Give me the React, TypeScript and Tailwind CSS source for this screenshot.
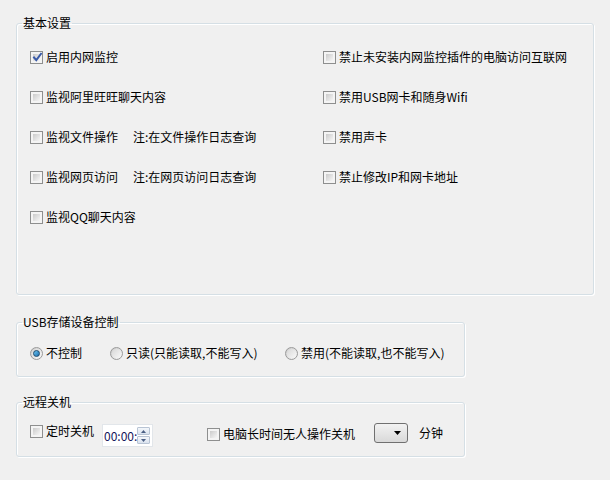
import React from "react";

const font = { fontFamily: '"Noto Sans CJK SC", "Noto Sans", sans-serif' };

function CheckBox({ checked = false }: { checked?: boolean }) {
  return (
    <div className="relative w-[13px] h-[13px] shrink-0 border border-[#8e8f8f] bg-[#f4f4f4] p-[2px]">
      <div className="w-full h-full bg-gradient-to-br from-[#cbcbcb] to-[#f6f6f6]" />
      {checked && (
        <svg className="absolute left-[1px] top-[0px]" width="11" height="11" viewBox="0 0 11 11">
          <path d="M2 5.5 L4.3 8.2 L9 1.8" fill="none" stroke="#3a5ba8" strokeWidth="2" strokeLinecap="square" />
        </svg>
      )}
    </div>
  );
}

function Radio({ checked = false }: { checked?: boolean }) {
  return (
    <div className="w-[13px] h-[13px] shrink-0 rounded-full border border-[#9a9a9a] bg-gradient-to-br from-[#c9c9c9] to-[#fbfbfb] flex items-center justify-center">
      <div className="w-[9px] h-[9px] rounded-full bg-gradient-to-br from-[#d8d8d8] to-[#f8f8f8] flex items-center justify-center">
        {checked && <div className="w-[7px] h-[7px] rounded-full border border-[#1c4a6e] bg-gradient-to-br from-[#6cc5f2] to-[#1a6fae]" />}
      </div>
    </div>
  );
}

function Check({ label, checked, note }: { label: React.ReactNode; checked?: boolean; note?: string }) {
  return (
    <div className="flex items-center h-[16px]">
      <CheckBox checked={checked} />
      <span className="ml-[3px] whitespace-nowrap">{label}</span>
      {note && <span className="ml-[15px] whitespace-nowrap">{note}</span>}
    </div>
  );
}

function Group({ title, className, children }: { title: string; className: string; children: React.ReactNode }) {
  return (
    <fieldset className={`box-border border border-[#d5dfe5] rounded-[3px] shadow-[inset_1px_1px_0_#ffffff,1px_1px_0_#ffffff] ${className}`}>
      <legend className="ml-[5px] px-[1px] leading-[16px] text-[12px]">{title}</legend>
      {children}
    </fieldset>
  );
}

export default function App() {
  return (
    <div className="w-[610px] h-[480px] bg-[#f0f0f0] text-[12px] leading-[16px] text-black px-[16px] pt-[15px] overflow-hidden" style={font}>
      <Group title="基本设置" className="w-[578px] h-[280px]">
        <div className="grid grid-cols-[293px_1fr] gap-y-[24px] pl-[13px] pt-[18px]">
          <Check label="启用内网监控" checked />
          <Check label="禁止未安装内网监控插件的电脑访问互联网" />
          <Check label="监视阿里旺旺聊天内容" />
          <Check label="禁用USB网卡和随身Wifi" />
          <Check label="监视文件操作" note="注:在文件操作日志查询" />
          <Check label="禁用声卡" />
          <Check label="监视网页访问" note="注:在网页访问日志查询" />
          <Check label="禁止修改IP和网卡地址" />
          <Check label="监视QQ聊天内容" />
          <div />
        </div>
      </Group>

      <Group title="USB存储设备控制" className="mt-[19px] w-[449px] h-[63px]">
        <div className="flex items-center h-[16px] pl-[13px] mt-[15px]">
          <div className="flex items-center w-[80px]">
            <Radio checked />
            <span className="ml-[3px] whitespace-nowrap">不控制</span>
          </div>
          <div className="flex items-center w-[175px]">
            <Radio />
            <span className="ml-[3px] whitespace-nowrap">只读(只能读取,不能写入)</span>
          </div>
          <div className="flex items-center">
            <Radio />
            <span className="ml-[3px] whitespace-nowrap">禁用(不能读取,也不能写入)</span>
          </div>
        </div>
      </Group>

      <Group title="远程关机" className="mt-[17px] w-[449px] h-[63px]">
        <div className="flex items-start pl-[13px] pt-[13px]">
          <Check label="定时关机" />
          <div className="ml-[8px] mt-[1px] w-[51px] h-[23px] bg-white border border-[#e2e6ea] flex items-center pl-[1px]">
            <span className="text-[#14145a]">00:00:</span>
            <div className="ml-auto mr-[2px] flex flex-col gap-[1px]">
              <div className="w-[13px] h-[8px] border border-[#b8c4d4] rounded-[1px] bg-gradient-to-b from-[#f4f7fb] to-[#d9e2ee] flex items-center justify-center">
                <svg width="5" height="3" viewBox="0 0 5 3"><path d="M0 3 L2.5 0 L5 3 Z" fill="#4a5f84" /></svg>
              </div>
              <div className="w-[13px] h-[8px] border border-[#b8c4d4] rounded-[1px] bg-gradient-to-b from-[#f4f7fb] to-[#d9e2ee] flex items-center justify-center">
                <svg width="5" height="3" viewBox="0 0 5 3"><path d="M0 0 L5 0 L2.5 3 Z" fill="#4a5f84" /></svg>
              </div>
            </div>
          </div>
          <div className="ml-[54px] mt-[3px]">
            <Check label="电脑长时间无人操作关机" />
          </div>
          <div className="ml-[19px] w-[34px] h-[20px] rounded-[3px] border border-[#707070] bg-gradient-to-b from-[#f2f2f2] to-[#d9d9d9] flex items-center justify-end pr-[6px]">
            <svg width="7" height="4" viewBox="0 0 7 4"><path d="M0 0 L7 0 L3.5 4 Z" fill="#000" /></svg>
          </div>
          <span className="ml-[11px] mt-[2px] whitespace-nowrap">分钟</span>
        </div>
      </Group>
    </div>
  );
}
